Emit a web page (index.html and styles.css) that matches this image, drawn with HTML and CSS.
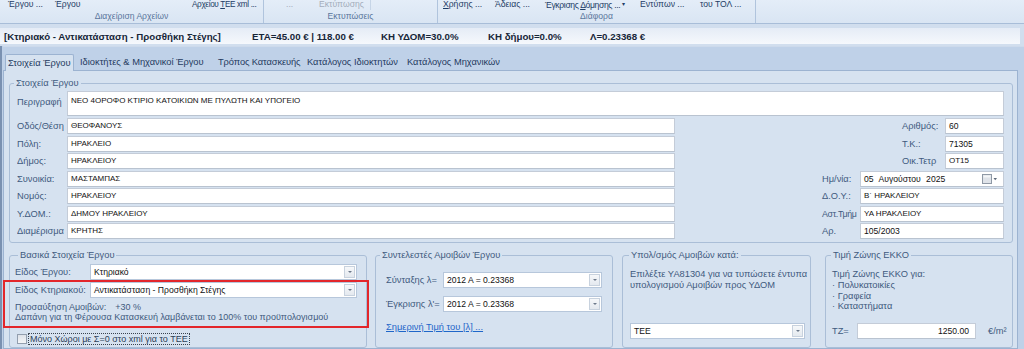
FILE: index.html
```html
<!DOCTYPE html>
<html lang="el">
<head>
<meta charset="utf-8">
<title>Στοιχεία Έργου</title>
<link rel="stylesheet" href="styles.css">
</head>
<body>
<div class="ribbon">
  <div class="rgroup g1">
    <div class="rbtns"><span class="rb w47">Έργου ...</span><span class="rb w137">Έργου</span><span class="rb tightr small">Αρχείου <u>Τ</u>ΕΕ xml ...</span></div>
    <div class="rlabel">Διαχείριση Αρχείων</div>
  </div>
  <div class="rgroup g2">
    <div class="rbtns"><span class="rb w33 dis">...</span><span class="rb sep dis">Εκτύπωσης</span></div>
    <div class="rlabel">Εκτυπώσεις</div>
  </div>
  <div class="rgroup g3">
    <div class="rbtns"><span class="rb w52"><u>Χ</u>ρήσης ...</span><span class="rb w50">Άδειας ...</span><span class="rb w95 tightr">Έγκρισης <u>Δ</u>όμησης ... <span class="caret">▾</span></span><span class="rb w60">Εντύπων ...</span><span class="rb">του ΤΟΛ ...</span></div>
    <div class="rlabel">Διάφορα</div>
  </div>
</div>

<div class="infobar">
  <span class="ib1">[Κτηριακό - Αντικατάσταση - Προσθήκη Στέγης]</span>
  <span class="ib2">ΕΤΑ=45.00 € | 118.00 €</span>
  <span class="ib3">ΚΗ ΥΔΟΜ=30.0%</span>
  <span class="ib4">ΚΗ δήμου=0.0%</span>
  <span>Λ=0.23368 €</span>
</div>

<div class="workspace">
  <div class="tabs">
    <div class="tab active">Στοιχεία Έργου</div>
    <div class="tab t2">Ιδιοκτήτες &amp; Μηχανικοί Έργου</div>
    <div class="tab t3">Τρόπος Κατασκευής</div>
    <div class="tab t4">Κατάλογος Ιδιοκτητών</div>
    <div class="tab">Κατάλογος Μηχανικών</div>
  </div>
  <div class="page">
    <fieldset class="box main">
      <legend>Στοιχεία Έργου</legend>
      <div class="row desc"><span class="lbl">Περιγραφή</span><div class="field caps">ΝΕΟ 4ΟΡΟΦΟ ΚΤΙΡΙΟ ΚΑΤΟΙΚΙΩΝ ΜΕ ΠΥΛΩΤΗ ΚΑΙ ΥΠΟΓΕΙΟ</div></div>
      <div class="rows">
        <div class="row"><span class="lbl">Οδός/Θέση</span><div class="field wide caps">ΘΕΟΦΑΝΟΥΣ</div>
          <div class="rside"><span class="rlbl">Αριθμός:</span><div class="field">60</div></div></div>
        <div class="row"><span class="lbl">Πόλη:</span><div class="field wide caps">ΗΡΑΚΛΕΙΟ</div>
          <div class="rside"><span class="rlbl">Τ.Κ.:</span><div class="field">71305</div></div></div>
        <div class="row"><span class="lbl">Δήμος:</span><div class="field wide caps">ΗΡΑΚΛΕΙΟΥ</div>
          <div class="rside"><span class="rlbl">Οικ.Τετρ</span><div class="field caps">ΟΤ15</div></div></div>
        <div class="row"><span class="lbl">Συνοικία:</span><div class="field wide caps">ΜΑΣΤΑΜΠΑΣ</div>
          <div class="rside long"><span class="rlbl">Ημ/νία:</span><div class="field date"><span class="datetext">05 Αυγούστου 2025</span><svg class="cal" width="16" height="10" viewBox="0 0 16 10"><rect x="0.5" y="0.5" width="9" height="9" fill="#dfe3e9" stroke="#8f99a6"/><rect x="1.5" y="1.5" width="7" height="2" fill="#f4f6f8"/><path d="M11.5 4 L15 4 L13.25 6.2 Z" fill="#5f6b7a"/></svg></div></div></div>
        <div class="row"><span class="lbl">Νομός:</span><div class="field wide caps">ΗΡΑΚΛΕΙΟΥ</div>
          <div class="rside long"><span class="rlbl">Δ.Ο.Υ.:</span><div class="field caps">Β΄ ΗΡΑΚΛΕΙΟΥ</div></div></div>
        <div class="row"><span class="lbl">Υ.ΔΟΜ.:</span><div class="field wide caps">ΔΗΜΟΥ ΗΡΑΚΛΕΙΟΥ</div>
          <div class="rside long"><span class="rlbl tight">Αστ.Τμήμ</span><div class="field caps">ΥΑ ΗΡΑΚΛΕΙΟΥ</div></div></div>
        <div class="row"><span class="lbl">Διαμέρισμα</span><div class="field wide caps">ΚΡΗΤΗΣ</div>
          <div class="rside long"><span class="rlbl">Αρ.</span><div class="field">105/2003</div></div></div>
      </div>
    </fieldset>

    <div class="bottom">
      <fieldset class="box fa">
        <legend>Βασικά Στοιχεία Έργου</legend>
        <div class="row crow first"><span class="clbl">Είδος Έργου:</span><div class="combo"><span class="ctext">Κτηριακό</span><span class="dd"><i></i></span></div></div>
        <div class="highlight">
          <div class="row crow"><span class="clbl">Είδος Κτηριακού:</span><div class="combo"><span class="ctext">Αντικατάσταση - Προσθήκη Στέγης</span><span class="dd"><i></i></span></div></div>
          <div class="note">
            <div>Προσαύξηση Αμοιβών:<span class="pct">+30 %</span></div>
            <div>Δαπάνη για τη Φέρουσα Κατασκευή λαμβάνεται το 100% του προϋπολογισμού</div>
          </div>
        </div>
        <div class="check"><span class="cbox"></span><span class="ctxt">Μόνο Χώροι με Σ=0 στο xml για το ΤΕΕ</span></div>
      </fieldset>

      <fieldset class="box fb">
        <legend>Συντελεστές Αμοιβών Έργου</legend>
        <div class="row crow r1"><span class="clbl">Σύνταξης λ=</span><div class="combo"><span class="ctext">2012 Α = 0.23368</span><span class="dd"><i></i></span></div></div>
        <div class="row crow r2"><span class="clbl">Έγκρισης λ'=</span><div class="combo"><span class="ctext">2012 Α = 0.23368</span><span class="dd"><i></i></span></div></div>
        <a class="link" href="#">Σημερινή Τιμή του [λ] ...</a>
      </fieldset>

      <fieldset class="box fc">
        <legend>Υπολ/σμός Αμοιβών κατά:</legend>
        <div class="para">Επιλέξτε ΥΑ81304 για να τυπώσετε έντυπα<br>υπολογισμού Αμοιβών προς ΥΔΟΜ</div>
        <div class="combo tee"><span class="ctext">ΤΕΕ</span><span class="dd"><i></i></span></div>
      </fieldset>

      <fieldset class="box fd">
        <legend>Τιμή Ζώνης ΕΚΚΟ</legend>
        <div class="para list">Τιμή Ζώνης ΕΚΚΟ για:<br>· Πολυκατοικίες<br>· Γραφεία<br>· Καταστήματα</div>
        <div class="row tz"><span class="tzl">ΤΖ=</span><div class="field num">1250.00</div><span class="unit">€/m²</span></div>
      </fieldset>
    </div>
  </div>
</div>
</body>
</html>
```

FILE: styles.css
```css
* { box-sizing: border-box; }
html, body { margin: 0; padding: 0; }
body {
  width: 1024px;
  height: 349px;
  overflow: hidden;
  font-family: "Liberation Sans", Arial, sans-serif;
  font-size: 9.3px;
  color: #3f5a7e;
  background: #d1deee;
}

/* ribbon */
.ribbon {
  display: flex;
  height: 24px;
  background: linear-gradient(#e4edf8, #d9e5f3);
  border-bottom: 1px solid #a8bdd8;
  overflow: hidden;
  font-size: 8.6px;
}
.rgroup {
  display: flex;
  flex-direction: column;
  height: 23px;
  border-right: 1px solid #b0c4dd;
  flex: none;
}
.g1 { width: 264px; }
.g2 { width: 174px; }
.g3 { width: 318px; }
.rbtns {
  display: flex;
  height: 11px;
  margin-top: -1.5px;
  line-height: 11px;
  color: #1e3d66;
  white-space: nowrap;
}
.g1 .rbtns { padding-left: 8px; }
.g2 .rbtns { padding-left: 22px; }
.g3 .rbtns { padding-left: 5px; }
.rb { flex: none; }
.tightr { letter-spacing: -0.35px; }
.small { font-size: 8.2px; }
.w47 { width: 47px; }
.w137 { width: 137px; }
.w33 { width: 33px; }
.w52 { width: 52px; }
.w50 { width: 50px; }
.w95 { width: 95px; }
.w60 { width: 60px; }
.dis { color: #a3adbb; }
.sep { width: 52px; border-right: 1px solid #c6d5e7; }
.caret { font-size: 6px; vertical-align: 2px; letter-spacing: 0; }
.rlabel {
  margin-top: 1.5px;
  height: 11px;
  line-height: 11px;
  text-align: center;
  color: #5a769c;
}

/* info bar */
.infobar {
  display: flex;
  align-items: center;
  height: 16px;
  margin: 4px 4px 2px 0;
  padding-left: 4px;
  background: linear-gradient(#e5ecf6, #f5f8fc);
  font-weight: bold;
  font-size: 9.7px;
  color: #172638;
  white-space: nowrap;
}
.ib1 { width: 248px; flex: none; }
.ib2 { width: 129px; flex: none; }
.ib3 { width: 107px; flex: none; }
.ib4 { width: 102px; flex: none; }

/* workspace & tabs */
.workspace {
  display: flex;
  flex-direction: column;
  height: 303px;
  background: #bfd1e8;
  border-left: 2px solid #7a91b1;
  padding-left: 1px;
}
.tabs {
  display: flex;
  align-items: flex-end;
  height: 24px;
  padding-left: 2px;
  border-top: 1px solid #cddaeb;
}
.tab {
  height: 16px;
  line-height: 16px;
  padding-left: 3px;
  color: #1f3a5f;
  white-space: nowrap;
  flex: none;
}
.tab.active {
  width: 69px;
  height: 17px;
  margin-bottom: -1px;
  padding-left: 2px;
  line-height: 16px;
  background: #d6e2f0;
  border: 1px solid #9cb3d1;
  border-bottom: none;
  border-radius: 2px 2px 0 0;
  position: relative;
  z-index: 1;
}
.t2 { width: 138px; margin-left: 3px; }
.t3 { width: 89px; letter-spacing: -0.1px; }
.t4 { width: 100px; }

.page {
  width: 1015px;
  flex: 1;
  background: #d6e2f0;
  border: 1px solid #9cb3d1;
  padding-left: 5px;
}

/* group boxes */
fieldset.box {
  margin: 0;
  min-width: 0;
  border: 1px solid #aabed7;
  border-radius: 3px;
}
fieldset.box legend {
  padding: 0 2px;
  line-height: 12px;
  color: #3f5a7e;
}
.main {
  width: 1004px;
  margin-top: 6px !important;
  padding: 2px 8px 3px 7px;
}
.main legend { margin-left: -3px; }

.row { display: flex; align-items: center; height: 16px; }
.lbl { width: 50px; flex: none; line-height: 12px; white-space: nowrap; overflow: hidden; }
.field {
  height: 16px;
  border: 1px solid #c4ccd8;
  border-bottom-color: #b9c3d0;
  background: #fff;
  padding: 0 3px;
  font-size: 8.6px;
  line-height: 14px;
  color: #111;
  white-space: nowrap;
  overflow: hidden;
}
.caps { font-size: 8px; }
.desc { height: 25px; align-items: flex-start; }
.desc .lbl { margin-top: 4.5px; }
.desc .field { flex: 1; height: 25px; padding-top: 2px; }
.rows {
  display: flex;
  flex-direction: column;
  gap: 1.5px;
  margin-top: 2px;
}
.field.wide { width: 608px; flex: none; }
.rside {
  flex: 1;
  display: flex;
  align-items: center;
  justify-content: flex-end;
}
.rlbl { width: 43px; flex: none; white-space: nowrap; }
.rside .field { width: 59px; flex: none; }
.rside.long .rlbl { width: 38px; }
.rside.long .field { width: 144px; }
.tight { letter-spacing: -0.3px; font-size: 8.8px; }
.date { display: flex; align-items: center; justify-content: space-between; padding-right: 5px; }
.datetext { word-spacing: 3px; }
.cal { flex: none; }

/* bottom boxes */
.bottom {
  display: flex;
  margin-top: 6px;
}
.bottom fieldset.box { height: 99px; flex: none; }
.fa { width: 358px; padding: 0 9px 0 5px; }
.fa legend { margin-left: 3px; }
.fb { width: 238px; margin-left: 8px !important; padding: 0 10px 0 10px; }
.fb legend { margin-left: -6px; }
.fc { width: 189px; margin-left: 9px !important; padding: 0 5px 0 7px; }
.fc legend { margin-left: -1px; }
.fd { width: 188px; margin-left: 14px !important; padding: 0 5px 0 6px; }
.fd legend { margin-left: -1px; }

.crow { height: 16px; }
.clbl { width: 75px; flex: none; white-space: nowrap; line-height: 12px; }
.combo {
  flex: 1;
  display: flex;
  align-items: center;
  justify-content: space-between;
  height: 16px;
  background: #fff;
  border: 1px solid #b7c7db;
  padding-left: 3px;
  font-size: 8.6px;
  color: #111;
  white-space: nowrap;
}
.dd {
  display: flex;
  align-items: center;
  justify-content: center;
  width: 11px;
  height: 12px;
  margin-right: 1px;
  border: 1px solid #c8d2de;
  background: linear-gradient(#f6f8fa, #e4e9ef);
}
.dd i {
  width: 0;
  height: 0;
  border-left: 2px solid transparent;
  border-right: 2px solid transparent;
  border-top: 2px solid #6c798a;
}
.fa .first { margin-top: 3px; }
.highlight {
  margin: 0 -12px;
  border: 2px solid #e3262b;
  padding: 0 10px 3px 10px;
}
.note { margin-top: 3.5px; line-height: 10.8px; font-size: 9px; white-space: nowrap; }
.pct { margin-left: 9px; }
.check {
  display: flex;
  align-items: center;
  margin-top: 5px;
  margin-left: 2px;
  height: 12px;
}
.cbox {
  width: 10px;
  height: 10px;
  border: 1px solid #929eae;
  background: linear-gradient(#dde2e9, #f4f6f8);
  flex: none;
}
.ctxt {
  margin-left: 1px;
  padding: 0 1px;
  border: 1px dotted #39424e;
  line-height: 10px;
  font-size: 9px;
  color: #2c3f58;
  white-space: nowrap;
}

.fb .clbl { width: 57px; }
.fb .r1 { margin-top: 11px; }
.fb .r2 { margin-top: 8px; }
.link {
  display: block;
  margin-top: 9px;
  line-height: 12px;
  color: #1f66c9;
  text-decoration: underline;
}

.para { margin-top: 8px; line-height: 10.6px; white-space: nowrap; }
.tee { margin-top: 33px; flex: none; }
.list { line-height: 10.8px; }
.tz { margin-top: 10.8px; }
.tzl { width: 25px; flex: none; }
.num { width: 119px; flex: none; text-align: right; padding-right: 6px; }
.unit { margin-left: 12px; }
```
